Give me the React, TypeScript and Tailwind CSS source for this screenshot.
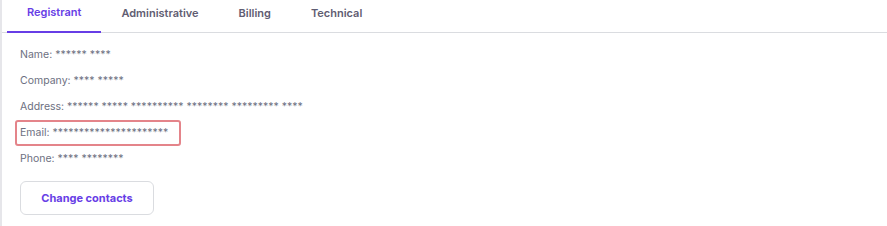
const tabs = ['Registrant', 'Administrative', 'Billing', 'Technical'];

const rows = [
  { label: 'Name', value: '****** ****' },
  { label: 'Company', value: '**** *****' },
  { label: 'Address', value: '****** ***** ********** ******** ********* ****' },
  { label: 'Email', value: '**********************', highlight: true },
  { label: 'Phone', value: '**** ********' },
];

export default function App() {
  return (
    <div className="h-[226px] w-[887px] overflow-hidden bg-white font-['Inter',sans-serif]">
      <div className="h-full border-l-2 border-[#e6e6ea]">
        {/* Tabs */}
        <div className="flex h-[33px] border-b border-[#dadce0] pl-[5px]">
          {tabs.map((t, i) => (
            <button
              key={t}
              className={`h-[33px] px-[20px] pb-[7px] text-[11px] font-semibold ${
                i === 0
                  ? 'border-b-2 border-[#673de6] text-[#673de6]'
                  : 'text-[#5f5d72]'
              }`}
            >
              {t}
            </button>
          ))}
        </div>

        {/* Contact details */}
        <div className="flex flex-col pl-[13px] pt-[9px]">
          {rows.map((r) => (
            <div
              key={r.label}
              className={`flex h-[26px] w-fit items-center text-[10.5px] text-[#6d7081] ${
                r.highlight
                  ? 'rounded-[3px] border-2 border-[#e4848a] pl-[3px] pr-[11px]'
                  : 'pl-[5px]'
              }`}
            >
              {r.label}: {r.value}
            </div>
          ))}
        </div>

        <div className="pl-[18px] pt-[9px]">
          <button className="h-[34px] w-[134px] rounded-[6px] border border-[#dadce0] text-[11px] font-bold text-[#673de6]">
            Change contacts
          </button>
        </div>
      </div>
    </div>
  );
}
